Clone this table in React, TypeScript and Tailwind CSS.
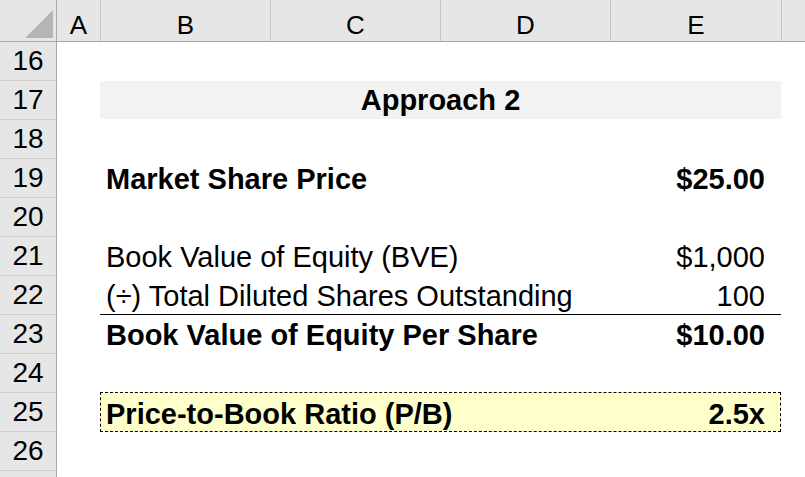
import React from "react";

const font = { fontFamily: '"Liberation Sans", Arial, sans-serif' };

function RowHead({ n }: { n?: number }) {
  return (
    <div className="w-[57px] h-[39px] shrink-0 bg-[#e6e6e6] border-r border-b border-r-[#a8a8a8] border-b-[#cfcfcf] flex justify-center text-[28px] leading-[38px] text-black">
      {n}
    </div>
  );
}

function Row({ n, children }: { n?: number; children?: React.ReactNode }) {
  return (
    <div className="flex h-[39px]">
      <RowHead n={n} />
      <div className="w-[43px] shrink-0" />
      <div className="w-[681px] shrink-0 h-[39px]">{children}</div>
    </div>
  );
}

function Cell({
  label,
  value,
  bold,
}: {
  label: string;
  value: string;
  bold?: boolean;
}) {
  return (
    <div
      className={`flex justify-between pl-[6px] pr-[16px] pt-[2px] text-[29px] leading-[36px] text-black ${
        bold ? "font-bold" : ""
      }`}
    >
      <span className="whitespace-nowrap">{label}</span>
      <span className="whitespace-nowrap">{value}</span>
    </div>
  );
}

export default function App() {
  const cols = [
    { l: "A", w: "w-[44px]" },
    { l: "B", w: "w-[170px]" },
    { l: "C", w: "w-[170px]" },
    { l: "D", w: "w-[170px]" },
    { l: "E", w: "w-[171px]" },
  ];
  return (
    <div className="w-[805px] h-[477px] overflow-hidden bg-white" style={font}>
      {/* column header */}
      <div className="flex h-[42px] bg-[#e6e6e6] border-b border-[#a8a8a8]">
        <div className="w-[57px] h-[41px] shrink-0 border-r border-[#a8a8a8] relative">
          <svg className="absolute left-0 top-0" width="56" height="41" viewBox="0 0 56 41">
            <polygon points="53,10 53,38 25,38" fill="#b5b5b5" />
          </svg>
        </div>
        {cols.map((c) => (
          <div
            key={c.l}
            className={`${c.w} h-[41px] shrink-0 border-r border-[#c4c4c4] flex items-end justify-center pb-[3px] text-[26px] leading-[26px] text-black`}
          >
            {c.l}
          </div>
        ))}
        <div className="flex-1" />
      </div>

      <Row n={16} />
      <Row n={17}>
        <div className="h-[38px] bg-[#f2f2f2] flex justify-center pt-[2px] text-[29px] leading-[34px] font-bold text-black">
          Approach 2
        </div>
      </Row>
      <Row n={18} />
      <Row n={19}>
        <Cell label="Market Share Price" value="$25.00" bold />
      </Row>
      <Row n={20} />
      <Row n={21}>
        <Cell label="Book Value of Equity (BVE)" value="$1,000" />
      </Row>
      <Row n={22}>
        <div className="h-[39px] border-b border-black">
          <Cell label="(÷) Total Diluted Shares Outstanding" value="100" />
        </div>
      </Row>
      <Row n={23}>
        <Cell label="Book Value of Equity Per Share" value="$10.00" bold />
      </Row>
      <Row n={24} />
      <Row n={25}>
        <div className="h-[40px] -mt-px border border-dashed border-black bg-[#ffffcc]">
          <div className="flex justify-between pl-[5px] pr-[15px] pt-[3px] text-[29px] leading-[36px] font-bold text-black">
            <span className="whitespace-nowrap">Price-to-Book Ratio (P/B)</span>
            <span className="whitespace-nowrap">2.5x</span>
          </div>
        </div>
      </Row>
      <Row n={26} />
      <Row />
    </div>
  );
}
